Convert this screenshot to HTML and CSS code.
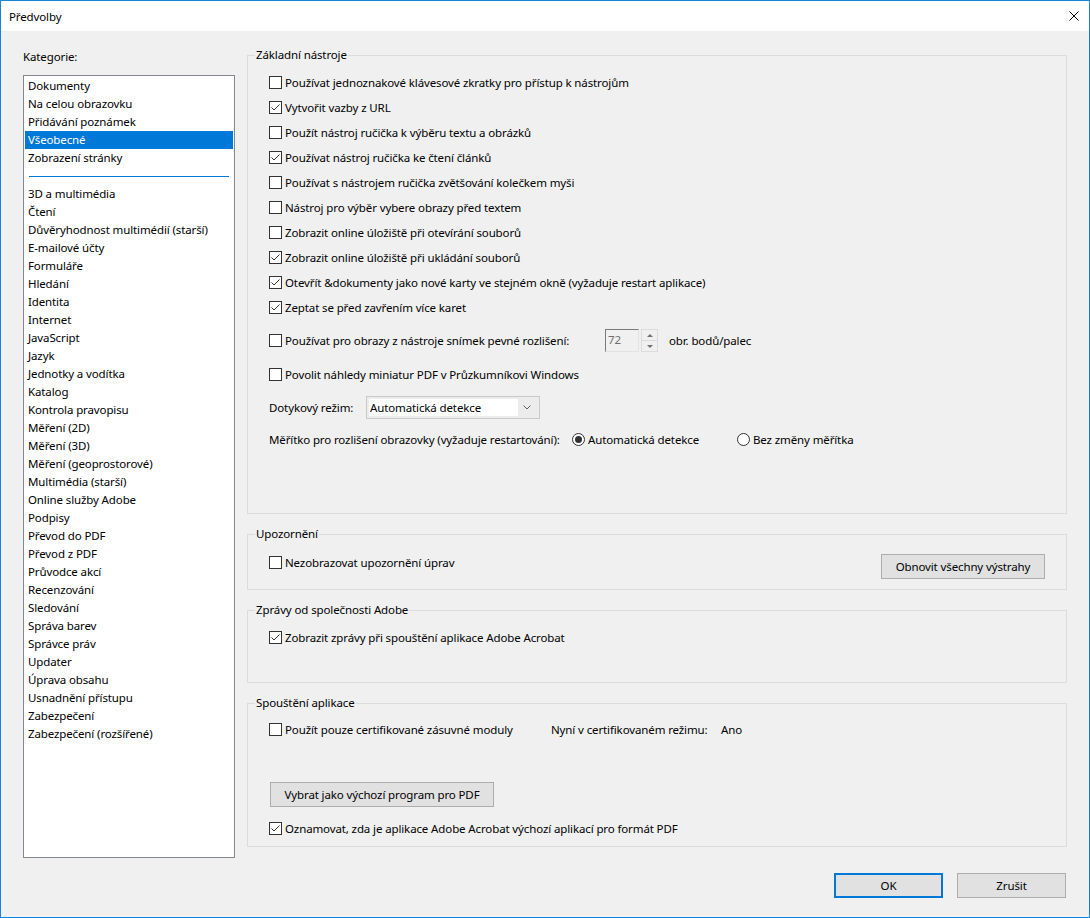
FILE: index.html
```html
<!DOCTYPE html>
<html lang="cs">
<head>
    <meta charset="UTF-8">
    <title>Předvolby</title>
    <link rel="stylesheet" href="styles.css">
</head>
<body>
    <div class="window">
        <div class="titlebar">
            <span class="title">Předvolby</span>
            <svg class="close" width="10" height="10" viewBox="0 0 10 10">
                <path d="M0.5 0.5 L9.5 9.5 M9.5 0.5 L0.5 9.5" stroke="#000" stroke-width="1" fill="none"/>
            </svg>
        </div>

        <div class="main">
            <div class="sidebar">
                <div class="sidebar-label">Kategorie:</div>
                <ul class="category-list">
                    <li>Dokumenty</li>
                    <li>Na celou obrazovku</li>
                    <li>Přidávání poznámek</li>
                    <li class="selected">Všeobecné</li>
                    <li>Zobrazení stránky</li>
                    <li class="separator"></li>
                    <li>3D a multimédia</li>
                    <li>Čtení</li>
                    <li>Důvěryhodnost multimédií (starší)</li>
                    <li>E-mailové účty</li>
                    <li>Formuláře</li>
                    <li>Hledání</li>
                    <li>Identita</li>
                    <li>Internet</li>
                    <li>JavaScript</li>
                    <li>Jazyk</li>
                    <li>Jednotky a vodítka</li>
                    <li>Katalog</li>
                    <li>Kontrola pravopisu</li>
                    <li>Měření (2D)</li>
                    <li>Měření (3D)</li>
                    <li>Měření (geoprostorové)</li>
                    <li>Multimédia (starší)</li>
                    <li>Online služby Adobe</li>
                    <li>Podpisy</li>
                    <li>Převod do PDF</li>
                    <li>Převod z PDF</li>
                    <li>Průvodce akcí</li>
                    <li>Recenzování</li>
                    <li>Sledování</li>
                    <li>Správa barev</li>
                    <li>Správce práv</li>
                    <li>Updater</li>
                    <li>Úprava obsahu</li>
                    <li>Usnadnění přístupu</li>
                    <li>Zabezpečení</li>
                    <li>Zabezpečení (rozšířené)</li>
                </ul>
            </div>

            <div class="panel">
                <fieldset class="group tools">
                    <legend>Základní nástroje</legend>
                    <div class="group-body">
                        <label class="row"><span class="check"></span>Používat jednoznakové klávesové zkratky pro přístup k nástrojům</label>
                        <label class="row"><span class="check"><svg viewBox="0 0 11 11"><polyline points="1.5,5.5 4,8 9.5,2.5"/></svg></span>Vytvořit vazby z URL</label>
                        <label class="row"><span class="check"></span>Použít nástroj ručička k výběru textu a obrázků</label>
                        <label class="row"><span class="check"><svg viewBox="0 0 11 11"><polyline points="1.5,5.5 4,8 9.5,2.5"/></svg></span>Používat nástroj ručička ke čtení článků</label>
                        <label class="row"><span class="check"></span>Používat s nástrojem ručička zvětšování kolečkem myši</label>
                        <label class="row"><span class="check"></span>Nástroj pro výběr vybere obrazy před textem</label>
                        <label class="row"><span class="check"></span>Zobrazit online úložiště při otevírání souborů</label>
                        <label class="row"><span class="check"><svg viewBox="0 0 11 11"><polyline points="1.5,5.5 4,8 9.5,2.5"/></svg></span>Zobrazit online úložiště při ukládání souborů</label>
                        <label class="row"><span class="check"><svg viewBox="0 0 11 11"><polyline points="1.5,5.5 4,8 9.5,2.5"/></svg></span>Otevřít &amp;dokumenty jako nové karty ve stejném okně (vyžaduje restart aplikace)</label>
                        <label class="row"><span class="check"><svg viewBox="0 0 11 11"><polyline points="1.5,5.5 4,8 9.5,2.5"/></svg></span>Zeptat se před zavřením více karet</label>

                        <div class="row row-spin">
                            <label class="row-label spin-label"><span class="check"></span>Používat pro obrazy z nástroje snímek pevné rozlišení:</label>
                            <span class="spin-input">72</span>
                            <span class="spin-arrows">
                                <span class="spin-btn"><span class="arrow-up"></span></span>
                                <span class="spin-btn"><span class="arrow-down"></span></span>
                            </span>
                            <span class="unit">obr. bodů/palec</span>
                        </div>

                        <label class="row row-thumbs"><span class="check"></span>Povolit náhledy miniatur PDF v Průzkumníkovi Windows</label>

                        <div class="row row-select">
                            <span class="touch-label">Dotykový režim:</span>
                            <div class="select">
                                <span class="select-value">Automatická detekce</span>
                                <svg class="chevron" width="8" height="5" viewBox="0 0 8 5">
                                    <polyline points="0.5,0.5 4,4 7.5,0.5" fill="none" stroke="#606060" stroke-width="1"/>
                                </svg>
                            </div>
                        </div>

                        <div class="row row-radio">
                            <span class="scale-label">Měřítko pro rozlišení obrazovky (vyžaduje restartování):</span>
                            <label class="radio-option first"><span class="radio on"></span>Automatická detekce</label>
                            <label class="radio-option"><span class="radio"></span>Bez změny měřítka</label>
                        </div>
                    </div>
                </fieldset>

                <fieldset class="group alerts">
                    <legend>Upozornění</legend>
                    <div class="group-body">
                        <label class="row"><span class="check"></span>Nezobrazovat upozornění úprav</label>
                        <button class="button reset-button">Obnovit všechny výstrahy</button>
                    </div>
                </fieldset>

                <fieldset class="group messages">
                    <legend>Zprávy od společnosti Adobe</legend>
                    <div class="group-body">
                        <label class="row"><span class="check"><svg viewBox="0 0 11 11"><polyline points="1.5,5.5 4,8 9.5,2.5"/></svg></span>Zobrazit zprávy při spouštění aplikace Adobe Acrobat</label>
                    </div>
                </fieldset>

                <fieldset class="group startup">
                    <legend>Spouštění aplikace</legend>
                    <div class="group-body">
                        <div class="row">
                            <label class="row-label cert-label"><span class="check"></span>Použít pouze certifikované zásuvné moduly</label>
                            <span class="cert-mode">Nyní v certifikovaném režimu:</span>
                            <span>Ano</span>
                        </div>
                        <button class="button default-pdf">Vybrat jako výchozí program pro PDF</button>
                        <label class="row row-notify"><span class="check"><svg viewBox="0 0 11 11"><polyline points="1.5,5.5 4,8 9.5,2.5"/></svg></span>Oznamovat, zda je aplikace Adobe Acrobat výchozí aplikací pro formát PDF</label>
                    </div>
                </fieldset>
            </div>
        </div>

        <div class="footer">
            <button class="button ok">OK</button>
            <button class="button">Zrušit</button>
        </div>
    </div>
</body>
</html>
```

FILE: styles.css
```css
* {
    box-sizing: border-box;
}

html, body {
    margin: 0;
    padding: 0;
}

body {
    font-family: "Noto Sans", "Open Sans", sans-serif;
    font-size: 11.5px;
    letter-spacing: -0.12px;
    color: #000;
    background-color: #f0f0f0;
}

.window {
    width: 1090px;
    height: 918px;
    border: 1px solid #1883d7;
    background-color: #f0f0f0;
    display: flex;
    flex-direction: column;
}

.titlebar {
    height: 30px;
    background-color: #fff;
    display: flex;
    align-items: center;
    justify-content: space-between;
    padding: 0 10px 0 8px;
}

.main {
    display: flex;
    align-items: flex-start;
    padding: 17px 22px 0 22px;
}

/* left category list */
.sidebar {
    width: 212px;
    flex: none;
}

.sidebar-label {
    line-height: 16px;
    margin-top: 1px;
    margin-bottom: 10px;
}

.category-list {
    list-style: none;
    margin: 0;
    padding: 1px;
    height: 783px;
    border: 1px solid #828790;
    background-color: #fff;
}

.category-list li {
    height: 18px;
    line-height: 18px;
    padding-left: 3px;
    white-space: nowrap;
}

.category-list .selected {
    background-color: #0078d7;
    color: #fff;
}

.category-list .separator {
    height: 1px;
    margin: 9px 4px 8px;
    padding: 0;
    background-color: #0078d7;
}

/* right panel */
.panel {
    width: 820px;
    margin-left: 12px;
    margin-top: -1px;
}

.group {
    margin: 0 0 12px;
    padding: 0;
    min-width: 0;
    border: 1px solid #dcdcdc;
}

.group legend {
    margin-left: 7px;
    padding: 0 1px;
    line-height: 16px;
}

.group-body {
    padding-left: 21px;
}

.tools .group-body {
    padding-top: 7px;
    padding-bottom: 61px;
}

.alerts .group-body {
    display: flex;
    align-items: flex-start;
    padding-top: 8px;
    padding-bottom: 10px;
}

.messages .group-body {
    padding-top: 7px;
    padding-bottom: 32px;
}

.startup .group-body {
    padding-top: 6px;
    padding-bottom: 5px;
}

.row {
    height: 25px;
    display: flex;
    align-items: center;
    white-space: nowrap;
}

.row-label {
    display: flex;
    align-items: center;
    flex: none;
}

.row-spin {
    margin-top: 8px;
}

.row-thumbs {
    margin-top: 9px;
}

.row-select {
    margin-top: 8px;
}

.row-radio {
    margin-top: 7px;
}

.check {
    width: 13px;
    height: 13px;
    flex: none;
    border: 1px solid #333;
    background-color: #fff;
    margin-right: 3px;
    display: inline-flex;
}

.check svg {
    width: 11px;
    height: 11px;
    fill: none;
    stroke: #333;
    stroke-width: 1;
}

/* spin box */
.spin-label {
    width: 336px;
}

.spin-input {
    width: 34px;
    height: 23px;
    border: 1px solid #e3e3e3;
    border-top-color: #7a7a7a;
    border-left-color: #7a7a7a;
    background-color: #f0f0f0;
    color: #6d6d6d;
    padding-left: 2px;
    line-height: 19px;
}

.spin-arrows {
    width: 17px;
    height: 23px;
    margin-left: 2px;
    display: flex;
    flex-direction: column;
}

.spin-btn {
    flex: 1;
    border: 1px solid #dcdcdc;
    display: flex;
    align-items: center;
    justify-content: center;
}

.spin-btn + .spin-btn {
    border-top: none;
}

.arrow-up {
    border-left: 3px solid transparent;
    border-right: 3px solid transparent;
    border-bottom: 3px solid #707070;
}

.arrow-down {
    border-left: 3px solid transparent;
    border-right: 3px solid transparent;
    border-top: 3px solid #707070;
}

.unit {
    margin-left: 11px;
}

/* dropdown */
.touch-label {
    width: 97px;
}

.select {
    width: 174px;
    height: 23px;
    border: 1px solid #c9c9c9;
    background-color: #ececec;
    padding: 2px;
    display: flex;
    align-items: stretch;
}

.select-value {
    flex: 1;
    background-color: #fff;
    padding-left: 1px;
    line-height: 17px;
}

.chevron {
    align-self: center;
    margin: 0 6px 0 5px;
}

/* radios */
.scale-label {
    width: 303px;
}

.radio-option {
    display: flex;
    align-items: center;
}

.radio-option.first {
    width: 165px;
}

.radio {
    width: 13px;
    height: 13px;
    border: 1px solid #333;
    border-radius: 50%;
    background-color: #fff;
    margin-right: 3px;
    display: inline-flex;
    align-items: center;
    justify-content: center;
}

.radio.on::after {
    content: "";
    width: 7px;
    height: 7px;
    border-radius: 50%;
    background-color: #333;
}

/* buttons */
.button {
    height: 25px;
    border: 1px solid #adadad;
    background-color: #e1e1e1;
    font: inherit;
    letter-spacing: inherit;
    color: #000;
    padding: 0;
    display: flex;
    align-items: center;
    justify-content: center;
}

.reset-button {
    width: 164px;
    margin-left: auto;
    margin-right: 21px;
    margin-top: 4px;
}

.cert-label {
    width: 282px;
}

.cert-mode {
    width: 170px;
}

.default-pdf {
    width: 224px;
    margin: 40px 0 0 1px;
}

.row-notify {
    margin-top: 9px;
}

.footer {
    display: flex;
    justify-content: flex-end;
    gap: 14px;
    padding-right: 23px;
    margin-top: 14px;
}

.footer .button {
    width: 109px;
}

.button.ok {
    border: 2px solid #0078d7;
}
```
